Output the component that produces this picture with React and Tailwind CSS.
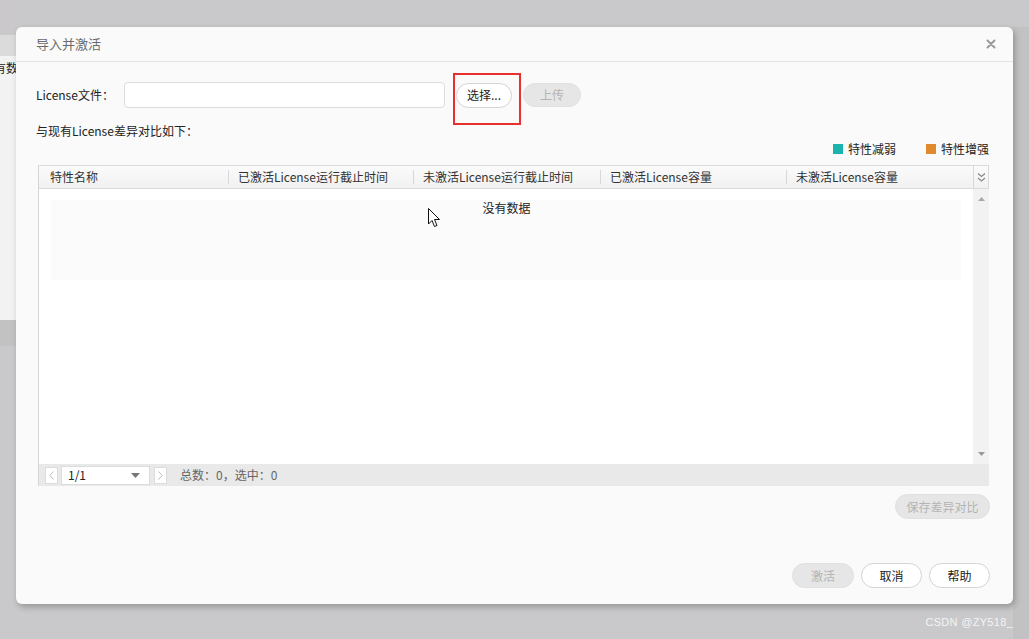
const font = { fontFamily: '"Noto Sans CJK SC", "Noto Sans", sans-serif' }

function Pill({ children, disabled, className = '' }) {
  return (
    <div
      className={`flex items-center justify-center rounded-full text-[12px] ${
        disabled
          ? 'bg-[#e6e6e6] text-[#b4b4b4] border border-[#e0e0e0]'
          : 'bg-white text-[#222] border border-[#d4d4d4]'
      } ${className}`}
    >
      {children}
    </div>
  )
}

const columns = [
  { label: '特性名称', w: 'w-[189px]' },
  { label: '已激活License运行截止时间', w: 'w-[185px]' },
  { label: '未激活License运行截止时间', w: 'w-[187px]' },
  { label: '已激活License容量', w: 'w-[186px]' },
  { label: '未激活License容量', w: 'w-[187px]' },
]

function App() {
  return (
    <div className="relative w-[1029px] h-[639px] overflow-hidden bg-[#c9c8ca]" style={font}>
      {/* page behind the modal */}
      <div className="flex flex-col w-[16px]">
        <div className="h-[35px] bg-[#cac8ca]" />
        <div className="h-[21px] bg-[#dcdbdc]" />
        <div className="h-[264px] bg-[#f2f2f2] pt-[3px] overflow-hidden">
          <div className="-ml-[6px] text-[12px] text-[#222] whitespace-nowrap">有数</div>
        </div>
        <div className="h-[26px] bg-[#c2c2c2]" />
      </div>
      <div className="absolute right-0 top-[27px] w-[16px] h-[612px] bg-[#c2c2c2]" />

      {/* modal */}
      <div className="absolute left-[16px] top-[27px] w-[997px] h-[577px] rounded-[6px] bg-[#fafafa] shadow-[2px_3px_6px_rgba(0,0,0,0.25)] flex flex-col">
        <div className="h-[35px] border-b border-[#e4e4e4] flex items-center justify-between pl-[20px] pr-[17px]">
          <span className="text-[13px] text-[#6a6a6a]">导入并激活</span>
          <svg width="10" height="10" viewBox="0 0 10 10">
            <path d="M1.5 1.5 L8.5 8.5 M8.5 1.5 L1.5 8.5" stroke="#9a9a9a" strokeWidth="2" strokeLinecap="round" />
          </svg>
        </div>

        <div className="flex items-center mt-[20px] h-[26px] pl-[20px]">
          <span className="w-[88px] text-[12px] text-[#222]">License文件：</span>
          <div className="w-[321px] h-[26px] bg-white border border-[#dcdcdc] rounded-[4px]" />
          <Pill className="ml-[11px] w-[56px] h-[25px]">选择...</Pill>
          <Pill disabled className="ml-[11px] w-[58px] h-[24px]">上传</Pill>
        </div>

        <div className="mt-[15px] pl-[20px] text-[12px] text-[#222] leading-[16px]">与现有License差异对比如下：</div>

        <div className="flex justify-end items-center gap-[30px] pr-[24px] mt-[2px] h-[16px] text-[12px] text-[#222]">
          <div className="flex items-center gap-[5px]">
            <span className="w-[10px] h-[10px] bg-[#1bb3ad]" />
            <span>特性减弱</span>
          </div>
          <div className="flex items-center gap-[5px]">
            <span className="w-[10px] h-[10px] bg-[#e0892d]" />
            <span>特性增强</span>
          </div>
        </div>

        {/* table */}
        <div className="ml-[22px] mt-[8px] w-[951px] h-[321px] flex flex-col border-l border-[#d6d6d6]">
          <div className="h-[24px] flex border border-l-0 border-[#dadada] bg-gradient-to-b from-[#fbfbfb] to-[#f1f1f1]">
            {columns.map((c, i) => (
              <div key={c.label} className={`${c.w} flex items-center text-[12px] text-[#333]`}>
                {i > 0 && <span className="w-px h-[14px] bg-[#d8d8d8]" />}
                <span className={i > 0 ? 'ml-[9px]' : 'ml-[11px]'}>{c.label}</span>
              </div>
            ))}
            <div className="flex-1 flex items-center justify-center border-l border-[#d8d8d8]">
              <svg width="9" height="11" viewBox="0 0 9 11">
                <path d="M1 1.5 L4.5 4.5 L8 1.5 M1 6 L4.5 9 L8 6" fill="none" stroke="#888" strokeWidth="1.2" />
              </svg>
            </div>
          </div>

          <div className="h-[275px] flex bg-white">
            <div className="flex-1 relative">
              <div className="absolute left-[12px] top-[11px] w-[910px] h-[80px] bg-[#fbfbfb]" />
              <div className="relative pt-[10px] text-center text-[12px] text-[#222] pl-[1px]">没有数据</div>
            </div>
            <div className="w-[16px] bg-[#f2f2f2] flex flex-col items-center justify-between py-[8px]">
              <svg width="7" height="4" viewBox="0 0 7 4"><path d="M0 4 L3.5 0 L7 4Z" fill="#aaa" /></svg>
              <svg width="7" height="4" viewBox="0 0 7 4"><path d="M0 0 L3.5 4 L7 0Z" fill="#999" /></svg>
            </div>
          </div>

          <div className="h-[22px] bg-[#e9e9e9] flex items-center pl-[6px] text-[12px]">
            <div className="w-[13px] h-[17px] bg-white border border-[#dcdcdc] flex items-center justify-center">
              <svg width="5" height="9" viewBox="0 0 5 9"><path d="M4.5 0.5 L0.8 4.5 L4.5 8.5" fill="none" stroke="#bbb" /></svg>
            </div>
            <div className="ml-[3px] w-[89px] h-[19px] bg-white border border-[#dcdcdc] flex items-center justify-between pl-[6px] pr-[9px] text-[#222]">
              <span>1/1</span>
              <svg width="9" height="5" viewBox="0 0 9 5"><path d="M0 0 L4.5 5 L9 0Z" fill="#777" /></svg>
            </div>
            <div className="ml-[4px] w-[13px] h-[17px] bg-white border border-[#dcdcdc] flex items-center justify-center">
              <svg width="5" height="9" viewBox="0 0 5 9"><path d="M0.5 0.5 L4.2 4.5 L0.5 8.5" fill="none" stroke="#bbb" /></svg>
            </div>
            <span className="ml-[13px] text-[#666]">总数：0，选中：0</span>
          </div>
        </div>

        <div className="flex justify-end pr-[23px] mt-[8px]">
          <Pill disabled className="w-[95px] h-[25px]">保存差异对比</Pill>
        </div>

        <div className="flex justify-end gap-[7px] pr-[23px] mt-[44px]">
          <Pill disabled className="w-[62px] h-[25px]">激活</Pill>
          <Pill className="w-[61px] h-[25px]">取消</Pill>
          <Pill className="w-[61px] h-[25px]">帮助</Pill>
        </div>

        {/* annotation box */}
        <div className="absolute left-[437px] top-[46px] w-[68px] h-[52px] border-2 border-[#e8302e]" />
      </div>

      {/* mouse cursor */}
      <svg className="absolute left-[428px] top-[208px]" width="13" height="20" viewBox="0 0 13 20">
        <path d="M0.5 0.5 L0.5 16 L4 12.5 L6.5 18.5 L9 17.5 L6.5 11.5 L11.5 11.5 Z" fill="#fff" stroke="#111" strokeWidth="1" strokeLinejoin="round" />
      </svg>

      <div className="absolute right-[16px] bottom-[9px] text-[11px] text-[#f4f4f4] tracking-[0.3px]" style={{ fontFamily: '"Liberation Sans", sans-serif' }}>
        CSDN @ZY518_
      </div>
    </div>
  )
}

export default App
